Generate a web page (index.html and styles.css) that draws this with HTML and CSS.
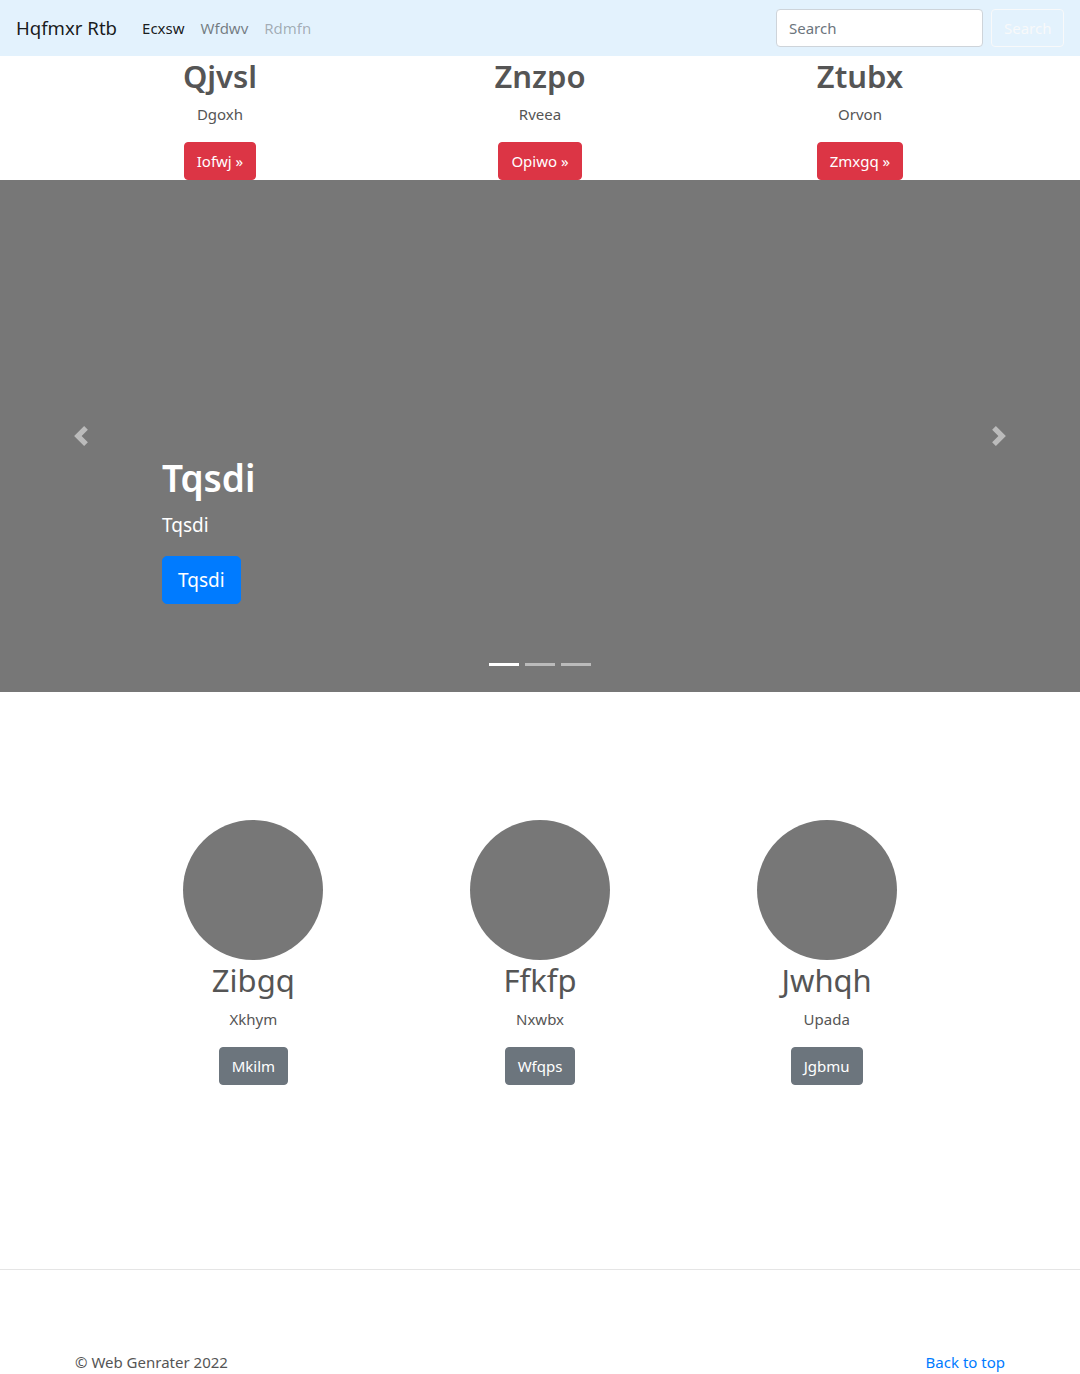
FILE: index.html
```html
<!DOCTYPE html>
<html lang="en">
<head>
<meta charset="utf-8">
<title>Hqfmxr Rtb</title>
<link rel="stylesheet" href="styles.css">
</head>
<body>
<nav class="navbar">
  <a class="brand" href="#">Hqfmxr Rtb</a>
  <ul class="nav">
    <li><a class="nav-link active" href="#">Ecxsw</a></li>
    <li><a class="nav-link" href="#">Wfdwv</a></li>
    <li><a class="nav-link disabled" href="#">Rdmfn</a></li>
  </ul>
  <form class="search">
    <input class="search-input" type="text" placeholder="Search">
    <button class="search-btn" type="button">Search</button>
  </form>
</nav>

<section class="container">
  <div class="row">
    <div class="col">
      <h2 class="h-bold">Qjvsl</h2>
      <p>Dgoxh</p>
      <a class="btn btn-danger" href="#">Iofwj &raquo;</a>
    </div>
    <div class="col">
      <h2 class="h-bold">Znzpo</h2>
      <p>Rveea</p>
      <a class="btn btn-danger" href="#">Opiwo &raquo;</a>
    </div>
    <div class="col">
      <h2 class="h-bold">Ztubx</h2>
      <p>Orvon</p>
      <a class="btn btn-danger" href="#">Zmxgq &raquo;</a>
    </div>
  </div>
</section>

<section class="carousel">
  <div class="caption">
    <h1>Tqsdi</h1>
    <p class="caption-text">Tqsdi</p>
    <a class="btn btn-lg btn-primary" href="#">Tqsdi</a>
  </div>
  <a class="control control-prev" href="#" aria-label="Previous">
    <svg width="20" height="20" viewBox="0 0 8 8"><path fill="#fff" d="M5.25 0l-4 4 4 4 1.5-1.5L4.25 4l2.5-2.5L5.25 0z"/></svg>
  </a>
  <a class="control control-next" href="#" aria-label="Next">
    <svg width="20" height="20" viewBox="0 0 8 8"><path fill="#fff" d="M2.75 0l-1.5 1.5L3.75 4l-2.5 2.5L2.75 8l4-4-4-4z"/></svg>
  </a>
  <ol class="indicators">
    <li class="ind active"></li>
    <li class="ind"></li>
    <li class="ind"></li>
  </ol>
</section>

<section class="marketing">
  <div class="row mrow">
    <div class="mcol">
      <div class="circle"></div>
      <h2>Zibgq</h2>
      <p>Xkhym</p>
      <a class="btn btn-secondary" href="#">Mkilm</a>
    </div>
    <div class="mcol">
      <div class="circle"></div>
      <h2>Ffkfp</h2>
      <p>Nxwbx</p>
      <a class="btn btn-secondary" href="#">Wfqps</a>
    </div>
    <div class="mcol">
      <div class="circle"></div>
      <h2>Jwhqh</h2>
      <p>Upada</p>
      <a class="btn btn-secondary" href="#">Jgbmu</a>
    </div>
  </div>
</section>

<footer class="footer">
  <div class="footer-inner">
    <p>&copy; Web Genrater 2022</p>
    <a href="#">Back to top</a>
  </div>
</footer>
</body>
</html>
```

FILE: styles.css
```css
* { box-sizing: border-box; }
html, body { margin: 0; padding: 0; }
body {
  font-family: "Noto Sans", "Open Sans", "Liberation Sans", sans-serif;
  font-size: 16px;
  line-height: 1.5;
  color: #212529;
  background: #fff;
  width: 1080px;
  overflow: hidden;
}
a { text-decoration: none; }
h1, h2, p { margin: 0; }

.navbar {
  height: 56px;
  background: #e3f2fd;
  display: flex;
  align-items: center;
  padding: 0 16px;
}
.brand {
  font-size: 18.6px;
  line-height: 30px;
  color: rgba(0,0,0,.9);
  margin-right: 17px;
}
.nav {
  list-style: none;
  margin: 0;
  padding: 0;
  display: flex;
  flex: 1;
}
.nav-link {
  display: block;
  padding: 8px;
  font-size: 15px;
  color: rgba(0,0,0,.5);
}
.nav-link.active { color: rgba(0,0,0,.9); }
.nav-link.disabled { color: rgba(0,0,0,.3); }
.search { display: flex; align-items: center; }
.search-input {
  width: 207px;
  height: 38px;
  padding: 6px 12px;
  font: inherit;
  font-size: 15px;
  color: #495057;
  border: 1px solid #ced4da;
  border-radius: 4px;
  background: #fff;
  margin-right: 8px;
}
.search-input::placeholder { color: #6c757d; }
.search-btn {
  height: 38px;
  width: 73px;
  padding: 6px 12px;
  font: inherit;
  font-size: 15px;
  color: #f8f9fa;
  background: transparent;
  border: 1px solid #f8f9fa;
  border-radius: 4px;
}

.container {
  width: 960px;
  margin: 0 auto;
  padding-top: 1px;
}
.row { display: flex; }
.col {
  flex: 1;
  text-align: center;
  display: flex;
  flex-direction: column;
  align-items: center;
}
h2 {
  font-size: 31px;
  line-height: 38px;
  font-weight: 400;
  color: #555;
  margin-bottom: 8px;
}
.h-bold { font-weight: 600; }
.col p, .mcol p {
  font-size: 15px;
  color: #555;
  margin-bottom: 16px;
}
.mcol h2 { margin-bottom: 9px; }
.mcol p { margin-bottom: 17px; }

.btn {
  display: inline-block;
  font-size: 15px;
  line-height: 24px;
  padding: 6px 12px;
  border: 1px solid transparent;
  border-radius: 4px;
  color: #fff;
}
.btn-danger { background: #dc3545; border-color: #dc3545; }
.btn-secondary { background: #6c757d; border-color: #6c757d; }
.btn-primary { background: #007bff; border-color: #007bff; }
.btn-lg {
  font-size: 19px;
  line-height: 30px;
  padding: 8px 15px;
  border-radius: 5px;
}

.carousel {
  position: relative;
  height: 512px;
  background: #777;
  display: flex;
  align-items: flex-end;
  padding: 0 162px 88px;
}
.caption { color: #fff; }
.caption h1 {
  font-size: 37px;
  line-height: 48px;
  font-weight: 600;
  margin-bottom: 8px;
}
.caption-text {
  font-size: 19px;
  line-height: 30px;
  margin-bottom: 16px;
}
.control {
  position: absolute;
  top: 0;
  bottom: 0;
  width: 162px;
  display: flex;
  align-items: center;
  justify-content: center;
  opacity: .5;
}
.control-prev { left: 0; }
.control-next { right: 0; }
.control svg { display: block; margin-top: 1px; }
.indicators {
  position: absolute;
  left: 0;
  right: 0;
  bottom: 26px;
  margin: 0;
  padding: 0;
  list-style: none;
  display: flex;
  justify-content: center;
  gap: 6px;
}
.ind {
  width: 30px;
  height: 3px;
  background: #fff;
  opacity: .5;
}
.ind.active { opacity: 1; }

.marketing {
  padding-top: 128px;
  height: 577px;
}
.mrow {
  width: 860px;
  margin: 0 auto;
}
.mcol {
  flex: 1;
  display: flex;
  flex-direction: column;
  align-items: center;
  text-align: center;
}
.circle {
  width: 140px;
  height: 140px;
  border-radius: 50%;
  background: #777;
  margin-bottom: 1px;
}

.footer {
  border-top: 1px solid #e5e5e5;
  padding-top: 80px;
}
.footer-inner {
  width: 930px;
  margin: 0 auto;
  display: flex;
  justify-content: space-between;
  font-size: 15px;
  line-height: 24px;
}
.footer-inner p { color: #555; }
.footer-inner a { color: #007bff; }
```
